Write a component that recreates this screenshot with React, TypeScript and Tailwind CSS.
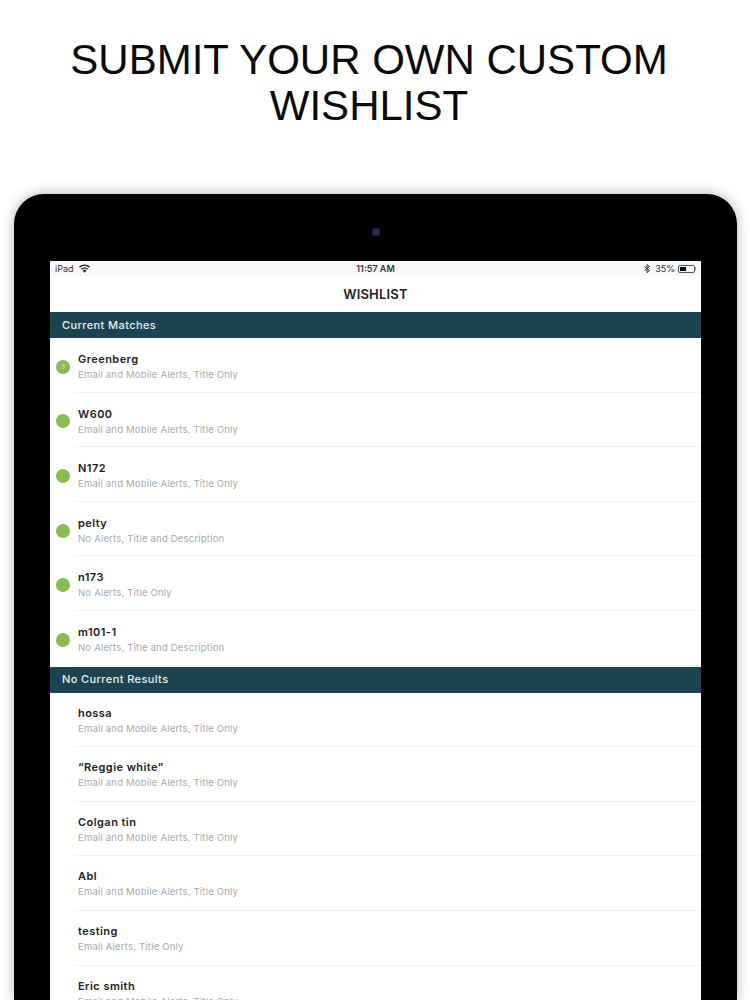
const matches = [
  { name: "Greenberg", detail: "Email and Mobile Alerts, Title Only", count: "9" },
  { name: "W600", detail: "Email and Mobile Alerts, Title Only" },
  { name: "N172", detail: "Email and Mobile Alerts, Title Only" },
  { name: "pelty", detail: "No Alerts, Title and Description" },
  { name: "n173", detail: "No Alerts, Title Only" },
  { name: "m101-1", detail: "No Alerts, Title and Description" },
];

const noResults = [
  { name: "hossa", detail: "Email and Mobile Alerts, Title Only" },
  { name: "“Reggie white”", detail: "Email and Mobile Alerts, Title Only" },
  { name: "Colgan tin", detail: "Email and Mobile Alerts, Title Only" },
  { name: "Abl", detail: "Email and Mobile Alerts, Title Only" },
  { name: "testing", detail: "Email Alerts, Title Only" },
  { name: "Eric smith", detail: "Email and Mobile Alerts, Title Only" },
];

type Item = { name: string; detail: string; count?: string };

const SectionHeader = ({ title }: { title: string }) => (
  <div className="flex h-[26px] items-center bg-[#1c4450] pl-3 text-[11px] font-medium tracking-[0.4px] text-[#e8f1f2]">
    {title}
  </div>
);

const Row = ({ item, dot }: { item: Item; dot: boolean }) => (
  <div className="flex h-[54.6px] items-center">
    <div className="flex w-[25px] justify-end pt-[3px] pr-[5px]">
      {dot && (
        <div className="flex h-[14px] w-[14px] items-center justify-center rounded-full bg-[#86bc50] text-[6px] text-[#d5e8bd]">
          {item.count}
        </div>
      )}
    </div>
    <div className={`flex h-full flex-1 flex-col border-b border-[#f3f3f3] pl-[3px] ${dot ? "pt-[14px]" : "pt-[13px]"}`}>
      <div className="text-[11px] leading-[14px] font-semibold tracking-[0.45px] text-[#222222]">{item.name}</div>
      <div className="mt-[2px] text-[9.5px] leading-[13px] tracking-[0.2px] text-[#a9a9ad]">{item.detail}</div>
    </div>
  </div>
);

const Wifi = () => (
  <svg width="11" height="9" viewBox="0 0 24 18" fill="none" stroke="#222" strokeWidth="3">
    <path d="M1 6c6.500-5.500 15.500-5.500 22 0" />
    <path d="M5 10.500c4.200-3.500 9.800-3.500 14 0" />
    <path d="M8.500 14c2-1.600 5-1.600 7 0" />
    <path d="M12 18l-3-3c1.800-1.300 4.200-1.300 6 0z" fill="#222" stroke="none" />
  </svg>
);

const Bluetooth = () => (
  <svg width="6" height="9" viewBox="0 0 12 18" fill="none" stroke="#333" strokeWidth="2">
    <path d="M1 5l10 8-5 4V1l5 4-10 8" />
  </svg>
);

const Battery = () => (
  <div className="flex items-center">
    <div className="h-[8px] w-[17px] rounded-[2px] border border-[#555] p-[1px]">
      <div className="h-full w-[6px] bg-black" />
    </div>
    <div className="h-[3px] w-[1px] bg-[#999]" />
  </div>
);

export default function App() {
  return (
    <div className="h-[1000px] w-[750px] overflow-hidden bg-white font-['Inter',sans-serif]">
      <h1 className="h-[194px] w-[738px] pt-[37px] text-center font-['Liberation_Sans',sans-serif] text-[42px] leading-[46px] font-normal text-[#0a0a0a]">
        SUBMIT YOUR OWN CUSTOM
        <br />
        WISHLIST
      </h1>

      <div className="ml-[14px] h-[806px] w-[723px] rounded-t-[30px] bg-black px-[36px] shadow-[0_0_14px_rgba(0,0,0,0.3)]">
        <div className="flex h-[67px] items-start justify-center pt-[34px]">
          <div className="h-[8px] w-[8px] rounded-full bg-[#2b2a4a]" />
        </div>

        <div className="h-[739px] overflow-hidden bg-white">
          <div className="relative flex h-[15px] items-center justify-between bg-[#f8f8f8] px-[5px] text-[9px] text-[#333333]">
            <div className="flex items-center gap-[5px]">
              iPad
              <Wifi />
            </div>
            <div className="absolute left-0 right-0 text-center font-semibold">11:57 AM</div>
            <div className="flex items-center gap-[5px]">
              <Bluetooth />
              <div className="flex items-center gap-[3px]">
                35%
                <Battery />
              </div>
            </div>
          </div>
          <div className="flex h-[36px] items-center justify-center pt-[1px] text-[13px] font-semibold tracking-[0.2px] text-[#222222]">
            WISHLIST
          </div>

          <SectionHeader title="Current Matches" />
          {matches.map((item) => (
            <Row key={item.name} item={item} dot />
          ))}
          <div className="mt-[1px]">
            <SectionHeader title="No Current Results" />
          </div>
          {noResults.map((item) => (
            <Row key={item.name} item={item} dot={false} />
          ))}
        </div>
      </div>
    </div>
  );
}
